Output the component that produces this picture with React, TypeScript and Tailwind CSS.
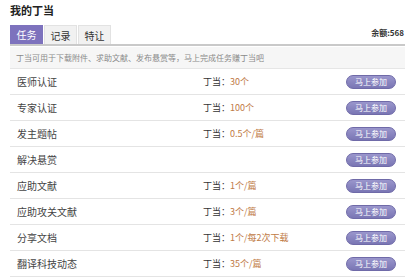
import React, { useState } from 'react'

const TABS = ['任务', '记录', '特让']

const TASKS: { name: string; reward?: string }[] = [
  { name: '医师认证', reward: '30个' },
  { name: '专家认证', reward: '100个' },
  { name: '发主题帖', reward: '0.5个/篇' },
  { name: '解决悬赏' },
  { name: '应助文献', reward: '1个/篇' },
  { name: '应助攻关文献', reward: '3个/篇' },
  { name: '分享文档', reward: '1个/每2次下载' },
  { name: '翻译科技动态', reward: '35个/篇' },
]

const App: React.FC = () => {
  const [activeTab, setActiveTab] = useState('任务')

  return (
    <div
      className="w-[420px] h-[280px] bg-white overflow-hidden px-[10px] pt-[3px]"
      style={{ fontFamily: '"Noto Sans CJK SC", "Noto Sans", sans-serif' }}
    >
      {/* 标题 */}
      <h1 className="text-[11px] font-bold text-[#222] leading-[14px]">我的丁当</h1>

      {/* 标签 和 余额 */}
      <div className="mt-[8px] w-[395px] flex items-end justify-between border-b-2 border-[#c9c9c9]">
        <div className="flex gap-[1px]">
          {TABS.map(tab => (
            <button
              key={tab}
              onClick={() => setActiveTab(tab)}
              className={`w-[33px] h-[19px] text-[10px] leading-[19px] text-center
                ${activeTab === tab ? 'bg-[#7d72bd] text-white' : 'bg-[#f1f1f1] text-[#333] border border-b-0 border-[#e2e2e2]'}`}
            >
              {tab}
            </button>
          ))}
        </div>
        <div className="text-[8px] font-bold text-[#333] mb-[5px] mr-[1px]">余额:568</div>
      </div>

      {/* 说明 */}
      <div className="w-[395px] h-[22px] mt-[1px] bg-[#f6f6f6] border-b border-[#e6e6e6] pl-[6px] text-[8px] leading-[22px] text-[#8a8a8a]">
        丁当可用于下载附件、求助文献、发布悬赏等，马上完成任务赚丁当吧
      </div>

      {/* 任务列表 */}
      <div className="w-[395px]">
        {TASKS.map(task => (
          <div
            key={task.name}
            className="h-[26px] flex items-center border-b border-[#e4e4e4] pl-[7px] pr-[9px]"
          >
            <div className="w-[186px] text-[10px] text-[#444]">{task.name}</div>
            <div className="flex-1 text-[9px]">
              {task.reward && (
                <>
                  <span className="text-[#333]">丁当：</span>
                  <span className="text-[#c07a45]">{task.reward}</span>
                </>
              )}
            </div>
            <button className="w-[50px] h-[14px] rounded-full bg-gradient-to-b from-[#9a96cc] to-[#7a76b4] border border-[#6f6aa8] text-white text-[8px] leading-[12px]">
              马上参加
            </button>
          </div>
        ))}
      </div>
    </div>
  )
}

export default App
